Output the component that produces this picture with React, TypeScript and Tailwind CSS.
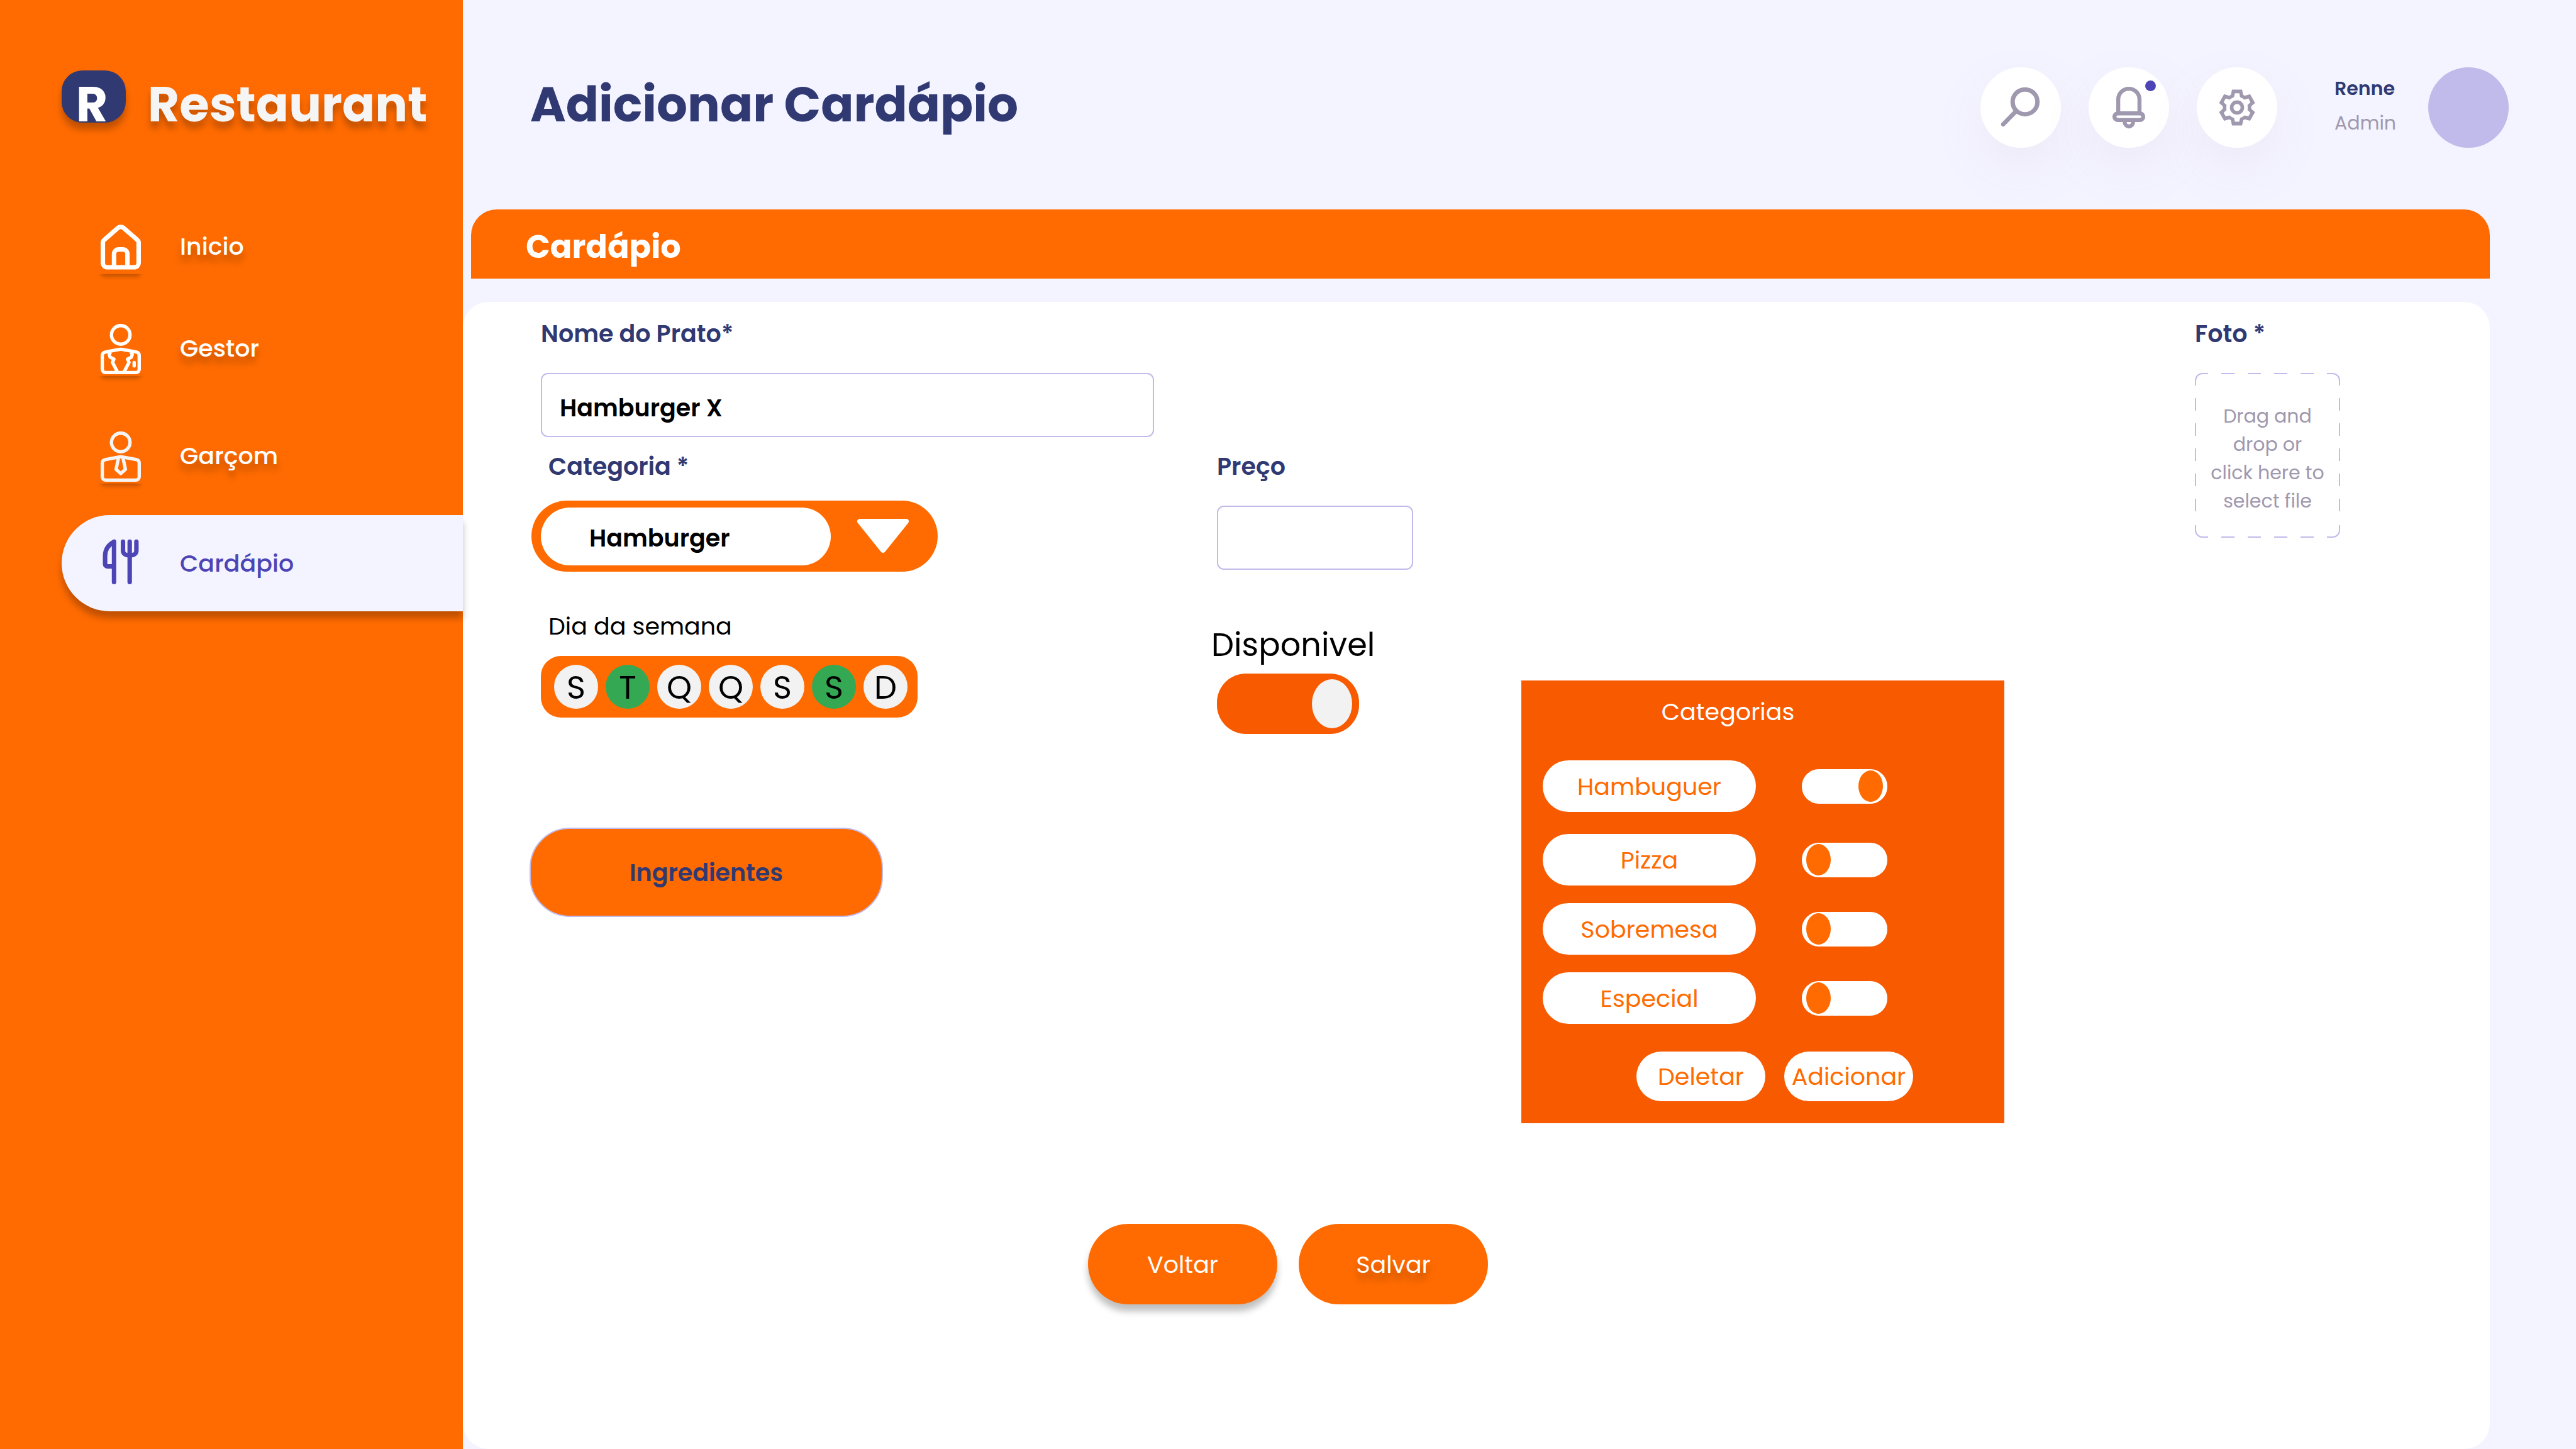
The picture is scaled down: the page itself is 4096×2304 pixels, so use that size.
import React, { useState } from "react";

type IconProps = { className?: string };

function IconShadow({ id, y }: { id: string; y: number }) {
  return (
    <g>
      <defs>
        <clipPath id={`${id}-clip`}>
          <rect x="0" y={y} width="540" height="120" />
        </clipPath>
        <filter id={`${id}-blur`} x="-50%" y="-50%" width="200%" height="200%">
          <feGaussianBlur stdDeviation="20" />
        </filter>
      </defs>
      <g clipPath={`url(#${id}-clip)`}>
        <rect x="92" y={y - 50} width="356" height="72" rx="30" fill="#000000" fillOpacity="0.25" filter={`url(#${id}-blur)`} />
      </g>
    </g>
  );
}

function HomeIcon({ className }: IconProps) {
  return (
    <svg viewBox="0 6 540 540" className={className} fill="none" stroke="#ffffff" strokeWidth="40" aria-hidden="true">
      <g stroke="none">
        <IconShadow id="home" y={522} />
      </g>
      <path d="M110 240C110 231 114 223 122 217L244 110C259 98 281 98 296 110L418 217C426 223 430 231 430 240V422C430 444 413 462 390 462H150C127 462 110 444 110 422Z" />
      <path d="M210 452V342A40 40 0 0 1 250 302H290A40 40 0 0 1 330 342V452" />
    </svg>
  );
}

const personBody =
  "M137 319L256 297Q270 295 284 297L407 319Q435 324 435 350V474A30 30 0 0 1 405 504H135A30 30 0 0 1 105 474V350Q105 324 137 319Z";

function ManagerIcon({ className }: IconProps) {
  return (
    <svg viewBox="0 18 540 540" className={className} fill="none" stroke="#ffffff" strokeWidth="30" strokeLinejoin="round" aria-hidden="true">
      <g stroke="none">
        <IconShadow id="manager" y={534} />
      </g>
      <circle cx="270" cy="167" r="83" />
      <path d={personBody} />
      <path d="M178 320L167 341L175 367L209 383L196 413L240 498" />
      <path d="M362 320L373 341L365 367L331 383L344 413L300 498" />
      <path d="M390 414V444" strokeLinecap="round" />
    </svg>
  );
}

function WaiterIcon({ className }: IconProps) {
  return (
    <svg viewBox="0 18 540 540" className={className} fill="none" stroke="#f4f4f4" strokeWidth="30" strokeLinejoin="round" aria-hidden="true">
      <g stroke="none">
        <IconShadow id="waiter" y={534} />
      </g>
      <circle cx="270" cy="167" r="83" />
      <path d={personBody} />
      <path d="M250 304L228 408L270 445L312 408L290 304" />
    </svg>
  );
}

function CutleryIcon({ className }: IconProps) {
  return (
    <svg viewBox="0 8 540 540" className={className} fill="none" stroke="#4d44b5" strokeWidth="40" strokeLinecap="round" strokeLinejoin="round" aria-hidden="true">
      <path d="M210 83V444M210 83C160 110 130 155 130 210V284A20 20 0 0 0 150 304H210" />
      <path d="M350 83V444M290 83V163A40 40 0 0 0 330 203H370A40 40 0 0 0 410 163V83" />
    </svg>
  );
}

function SearchIcon() {
  return (
    <svg viewBox="0 0 240 240" className="size-32" fill="none" stroke="#a098ae" strokeWidth="13" strokeLinecap="round" aria-hidden="true">
      <circle cx="133" cy="103" r="37" />
      <path d="M107 130L68 170" />
    </svg>
  );
}

function BellIcon() {
  return (
    <svg viewBox="0 0 720 720" className="size-32" fill="none" stroke="#a098ae" strokeWidth="36" aria-hidden="true">
      <path d="M265 412V287A95 95 0 0 1 455 287V412" />
      <rect x="231" y="412" width="258" height="60" rx="30" />
      <path d="M323 488A37 40 0 0 0 398 488" />
    </svg>
  );
}

function GearIcon() {
  return (
    <svg viewBox="984 30 720 720" className="size-32" aria-hidden="true">
      <path
        fill="#a098ae"
        fillRule="evenodd"
        d="M1299 229H1389L1399 276L1413 285L1461 271L1505 349L1471 379V401L1505 431L1461 508L1413 495L1399 504L1389 550H1299L1289 504L1275 495L1228 508L1184 431L1217 401V379L1184 349L1228 271L1275 285L1289 276ZM1325 262L1317 297Q1295 305 1277 320L1243 309L1224 344L1250 366Q1247 390 1250 413L1224 437L1243 469L1277 460Q1295 475 1317 484L1325 517H1364L1371 484Q1393 475 1411 460L1446 469L1464 437L1438 413Q1441 390 1438 366L1464 344L1446 309L1411 320Q1393 305 1371 297L1364 262Z"
      />
      <circle cx="1344" cy="390" r="48" fill="none" stroke="#a098ae" strokeWidth="32" />
    </svg>
  );
}

const navItems = [
  { label: "Inicio", Icon: HomeIcon, height: "h-[135px]" },
  { label: "Gestor", Icon: ManagerIcon, height: "h-[153px]" },
  { label: "Garçom", Icon: WaiterIcon, height: "h-[153px]" },
];

function Sidebar() {
  return (
    <aside className="relative z-10 w-[736px] shrink-0 bg-[#ff6b00]">
      <div className="flex items-end gap-[35px] pt-[112px] pl-[98px]">
        <div className="flex h-[83px] w-[102px] items-end rounded-[33px] bg-[#303972] pl-[23px] text-[77px] leading-[58px] font-bold text-white shadow-[0_11px_11px_rgba(0,0,0,0.25)]">
          R
        </div>
        <span className="text-[77px] leading-[58px] font-bold text-[#f5f5f5] [text-shadow:0_11px_11px_rgba(0,0,0,0.25)]">Restaurant</span>
      </div>
      <nav className="mt-[129px] ml-[98px] flex flex-col gap-[18px]">
        {navItems.map(({ label, Icon, height }) => (
          <a key={label} href="#" className={`flex items-center gap-[46px] pl-[46px] ${height}`}>
            <Icon className="size-24 overflow-visible" />
            <span className="text-[38px] font-medium text-white [text-shadow:0_11px_11px_rgba(0,0,0,0.25)]">{label}</span>
          </a>
        ))}
        <a
          href="#"
          aria-current="page"
          className="flex h-[153px] items-center gap-[46px] rounded-l-[77px] bg-[#f3f4ff] pl-[46px] shadow-[0_11px_11px_rgba(0,0,0,0.25)]"
        >
          <CutleryIcon className="size-24" />
          <span className="text-[38px] font-medium text-[#4d44b5]">Cardápio</span>
        </a>
      </nav>
    </aside>
  );
}

const roundButton =
  "relative size-32 rounded-full bg-white shadow-[0_32px_80px_rgba(220,150,190,0.1)]";

function Header() {
  return (
    <header className="flex items-start justify-between pt-[107px] pr-[107px] pl-[107px]">
      <h1 className="text-[77px] leading-[118px] font-bold text-[#303972]">Adicionar Cardápio</h1>
      <div className="flex">
        <div className="flex gap-11">
          <button type="button" aria-label="Pesquisar" className={roundButton}>
            <SearchIcon />
          </button>
          <button type="button" aria-label="Notificações" className={roundButton}>
            <BellIcon />
            <span className="absolute top-[21px] right-[21px] size-[17px] rounded-full bg-[#4d44b5]" />
          </button>
          <button type="button" aria-label="Configurações" className={roundButton}>
            <GearIcon />
          </button>
        </div>
        <div className="ml-[91px] w-[149px] pt-1.5 text-[30px] leading-[55px]">
          <p className="font-semibold text-[#303972]">Renne</p>
          <p className="text-[#a098ae]">Admin</p>
        </div>
        <div className="size-32 rounded-full bg-[#c1bbeb]" />
      </div>
    </header>
  );
}

const labelText = "text-[38px] leading-[62px] font-semibold text-[#303972]";

function WeekDays() {
  const [active, setActive] = useState([1, 5]);
  const toggle = (i: number) =>
    setActive((days) => (days.includes(i) ? days.filter((d) => d !== i) : [...days, i]));
  return (
    <div role="group" aria-labelledby="week" className="mt-[17px] ml-[18px] flex h-[98px] w-[599px] items-center gap-3 rounded-[32px] bg-[#ff6b00] pl-[21px]">
      {["S", "T", "Q", "Q", "S", "S", "D"].map((day, i) => (
        <button
          key={i}
          type="button"
          aria-pressed={active.includes(i)}
          onClick={() => toggle(i)}
          className="size-[70px] rounded-full bg-[#f2f2f2] text-[51px] leading-[73px] text-black aria-pressed:bg-[#34a853]"
        >
          {day}
        </button>
      ))}
    </div>
  );
}

function DishColumn() {
  return (
    <div className="flex w-[1084px] shrink-0 flex-col items-start">
      <label htmlFor="name" className={`ml-[18px] ${labelText}`}>
        Nome do Prato*
      </label>
      <input
        id="name"
        defaultValue="Hamburger X"
        className="mt-[31px] ml-[18px] h-[102px] w-[975px] rounded-[11px] border-2 border-[#c1bbeb] bg-white pt-2 pl-[28px] text-[38px] font-semibold text-black"
      />
      <label htmlFor="category" className={`mt-4 ml-[30px] ${labelText}`}>
        Categoria *
      </label>
      <div className="mt-[23px] ml-[3px] flex h-[113px] w-[646px] items-center rounded-full bg-[#ff6b00] pl-[15px]">
        <select
          id="category"
          className="h-[92px] w-[461px] appearance-none rounded-full bg-white pt-1.5 pl-[77px] text-[38px] font-semibold text-black"
        >
          <option>Hamburger</option>
          <option>Pizza</option>
          <option>Sobremesa</option>
          <option>Especial</option>
        </select>
        <svg viewBox="0 0 82 55" className="ml-[42px] h-[55px] w-[82px]" fill="#ffffff" stroke="#ffffff" strokeWidth="8" strokeLinejoin="round" aria-hidden="true">
          <path d="M4 4H78L41 50Z" />
        </svg>
      </div>
      <p id="week" className="mt-[57px] ml-[30px] text-[38px] leading-[60px] text-black">
        Dia da semana
      </p>
      <WeekDays />
      <button
        type="button"
        className="mt-[175px] h-[142px] w-[562px] rounded-[64px] border-2 border-[#c1bbeb] bg-[#ff6b00] text-[38px] font-semibold text-[#303972]"
      >
        Ingredientes
      </button>
    </div>
  );
}

function PriceColumn() {
  return (
    <div className="flex w-[493px] shrink-0 flex-col items-start pt-[211px]">
      <label htmlFor="price" className={`ml-[9px] ${labelText}`}>
        Preço
      </label>
      <input
        id="price"
        className="mt-[31px] ml-[9px] h-[102px] w-[312px] rounded-[11px] border-2 border-[#c1bbeb] bg-white px-[28px] text-[38px] font-semibold text-black"
      />
      <label htmlFor="available" className="mt-[89px] text-[51px] leading-[60px] text-black">
        Disponivel
      </label>
      <input
        id="available"
        type="checkbox"
        role="switch"
        defaultChecked
        className="mt-4 ml-[9px] flex h-24 w-[226px] appearance-none items-center justify-start rounded-[46px] bg-[#f85a00] px-[11px] before:h-[78px] before:w-16 before:rounded-[50%] before:bg-[#f2f2f2] checked:justify-end"
      />
    </div>
  );
}

const categories = [
  { name: "Hambuguer", on: true, spacing: "mb-[7px]" },
  { name: "Pizza", on: false, spacing: "" },
  { name: "Sobremesa", on: false, spacing: "" },
  { name: "Especial", on: false, spacing: "" },
];

function CategoriesPanel() {
  const action = "h-[79px] w-[205px] rounded-full bg-white text-[38px] text-[#ff6b00]";
  return (
    <section className="mt-[582px] w-[768px] shrink-0 bg-[#f85a00] pt-5 pb-[35px] pl-[34px]">
      <div className="w-[589px]">
        <h3 className="text-center text-[38px] leading-[60px] text-white">Categorias</h3>
        <ul className="mt-[47px] flex flex-col gap-7">
          {categories.map(({ name, on, spacing }) => (
            <li key={name} className={`flex items-center gap-[73px] ${spacing}`}>
              <label
                htmlFor={`category-${name}`}
                className="flex h-[82px] w-[339px] items-center justify-center rounded-full bg-white text-[38px] text-[#ff6b00]"
              >
                {name}
              </label>
              <input
                id={`category-${name}`}
                type="checkbox"
                role="switch"
                defaultChecked={on}
                className="flex h-[55px] w-[136px] appearance-none items-center justify-start rounded-[27px] bg-white px-[7px] before:h-[50px] before:w-[39px] before:rounded-[50%] before:bg-[#ff6b00] checked:justify-end"
              />
            </li>
          ))}
        </ul>
        <div className="mt-11 flex justify-end gap-[30px]">
          <button type="button" className={action}>
            Deletar
          </button>
          <button type="button" className={action}>
            Adicionar
          </button>
        </div>
      </div>
    </section>
  );
}

function PhotoColumn() {
  return (
    <div className="mr-[238px] ml-auto w-[231px] shrink-0">
      <p className={labelText}>Foto *</p>
      <label className="relative mt-[31px] flex h-[262px] cursor-pointer flex-col pt-[46px] text-center text-[30px] leading-[45px] text-[#a098ae]">
        <input type="file" aria-label="Foto" className="sr-only" />
        <svg viewBox="0 0 231 262" className="absolute inset-0 size-full" fill="none" stroke="#c1bbeb" strokeWidth="2" aria-hidden="true">
          <path d="M1 20V12A11 11 0 0 1 12 1H21M210 1H219A11 11 0 0 1 230 12V20M230 242V250A11 11 0 0 1 219 261H210M21 261H12A11 11 0 0 1 1 250V242" />
          <path d="M42 1H190M42 261H190" strokeDasharray="21 21" />
          <path d="M1 40V222M230 40V222" strokeDasharray="20 20" />
        </svg>
        <span>Drag and</span>
        <span>drop or</span>
        <span>click here to</span>
        <span>select file</span>
      </label>
    </div>
  );
}

export default function App() {
  const action = "h-32 w-[301px] rounded-full bg-[#ff6b00] text-[38px] text-white";
  return (
    <div className="flex min-h-screen bg-[#f3f4ff] font-['Poppins','Inter',sans-serif]">
      <Sidebar />
      <main className="flex min-w-0 flex-1 flex-col">
        <Header />
        <h2 className="mt-[98px] mr-[137px] ml-[13px] flex h-[110px] items-center rounded-t-[41px] bg-[#ff6b00] pt-2 pl-[87px] text-[51px] font-bold text-white">
          Cardápio
        </h2>
        <form className="mt-[37px] mr-[137px] flex-1 rounded-[41px] bg-white pt-5" onSubmit={(e) => e.preventDefault()}>
          <div className="flex items-start pl-[106px]">
            <DishColumn />
            <PriceColumn />
            <CategoriesPanel />
            <PhotoColumn />
          </div>
          <div className="mt-40 flex gap-[34px] pl-[994px]">
            <button type="button" className={`${action} shadow-[0_11px_11px_rgba(0,0,0,0.25)]`}>
              Voltar
            </button>
            <button type="submit" className={`${action} [text-shadow:0_11px_11px_rgba(0,0,0,0.25)]`}>
              Salvar
            </button>
          </div>
        </form>
      </main>
    </div>
  );
}
